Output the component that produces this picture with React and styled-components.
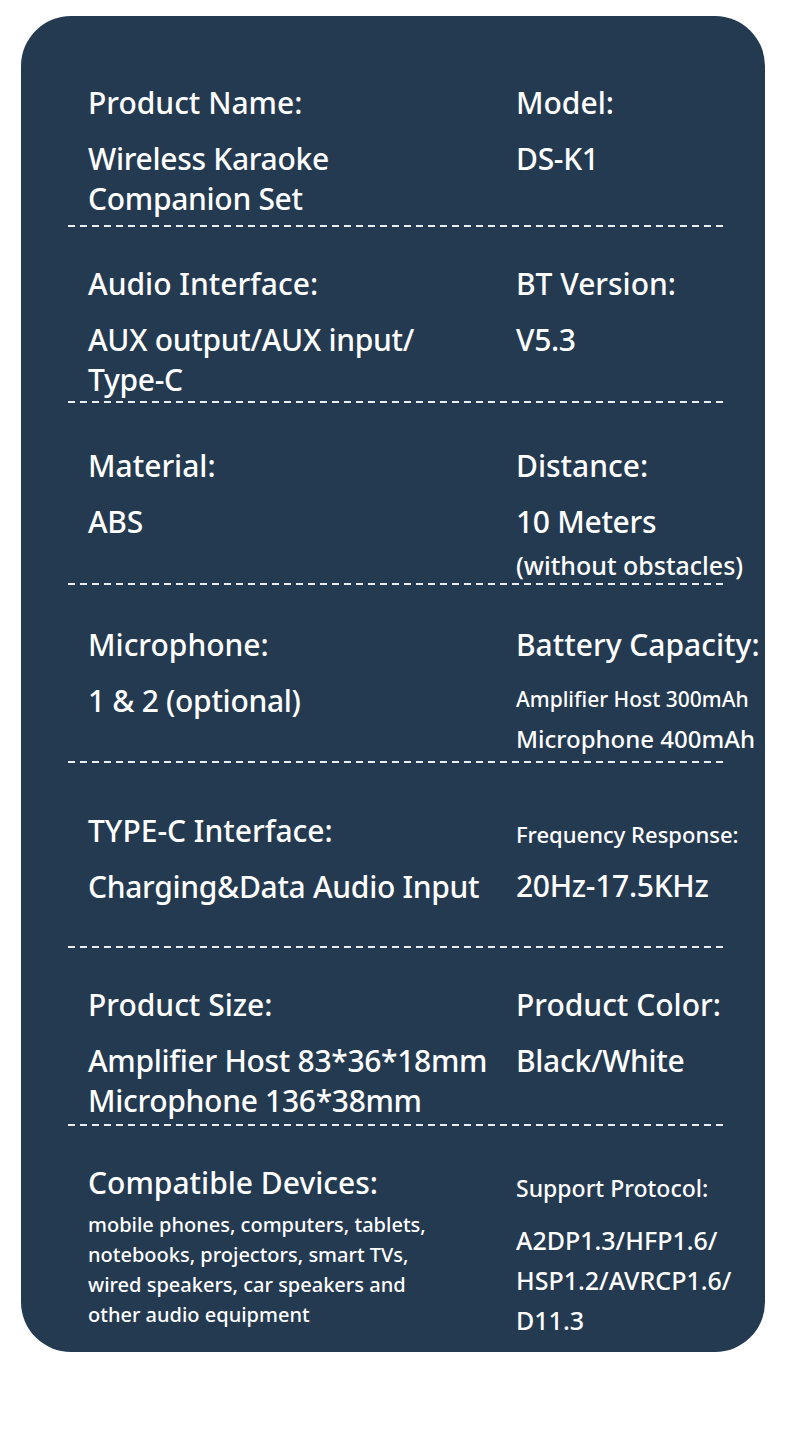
import styled, { createGlobalStyle } from "styled-components"

const GlobalStyle = createGlobalStyle`
  body {
    margin: 0;
    background: #ffffff;
    font-family: "Noto Sans", "Open Sans", sans-serif;
  }
`;

const Page = styled.div`
  padding: 16px 25px 92px 21px;
`;

const Card = styled.div`
  width: 744px;
  box-sizing: border-box;
  padding-left: 47px;
  background: #243a51;
  border-radius: 50px;
  color: #ffffff;
`;

const Section = styled.div`
  width: 657px;
  height: ${props => props.$h}px;
  box-sizing: border-box;
  padding: ${props => props.$pt}px 0 0 20px;
  display: grid;
  grid-template-columns: 428px 1fr;
  align-items: start;
  background-image: ${props => props.$last ? "none" : "linear-gradient(to right, #e9eef3 7px, transparent 7px)"};
  background-size: 12px 2px;
  background-repeat: repeat-x;
  background-position: left bottom;
`;

const Col = styled.div`
  display: flex;
  flex-direction: column;
  white-space: nowrap;
`;

const Label = styled.div`
  font-size: ${props => props.$size || 30}px;
  line-height: ${props => props.$lh || 40}px;
  font-weight: 500;
`;

const Values = styled.div`
  margin-top: ${props => props.$mt ?? 16}px;
  display: flex;
  flex-direction: column;
`;

const Line = styled.div`
  font-size: ${props => props.$size || 30}px;
  line-height: ${props => props.$lh || 40}px;
  letter-spacing: ${props => props.$size ? 0 : -0.3}px;
  font-weight: 500;
`;

const devices = [
  "mobile phones, computers, tablets,",
  "notebooks, projectors, smart TVs,",
  "wired speakers, car speakers and",
  "other audio equipment",
].map(text => ({ text, size: 20, lh: 30 }));

const protocols = ["A2DP1.3/HFP1.6/", "HSP1.2/AVRCP1.6/", "D11.3"].map(text => ({ text, size: 25 }));

const rows = [
  {
    pt: 67, h: 211,
    left: { label: "Product Name:", lines: ["Wireless Karaoke", "Companion Set"] },
    right: { label: "Model:", lines: ["DS-K1"] },
  },
  {
    pt: 37, h: 176,
    left: { label: "Audio Interface:", lines: ["AUX output/AUX input/", "Type-C"] },
    right: { label: "BT Version:", lines: ["V5.3"] },
  },
  {
    pt: 43, h: 182,
    left: { label: "Material:", lines: ["ABS"] },
    right: { label: "Distance:", lines: ["10 Meters", { text: "(without obstacles)", size: 25, lh: 46 }] },
  },
  {
    pt: 40, h: 178,
    left: { label: "Microphone:", lines: ["1 & 2 (optional)"] },
    right: {
      label: "Battery Capacity:",
      lines: [{ text: "Amplifier Host 300mAh", size: 21, lh: 36 }, { text: "Microphone 400mAh", size: 24, lh: 43 }],
    },
  },
  {
    pt: 48, h: 185,
    left: { label: "TYPE-C Interface:", lines: ["Charging&Data Audio Input"] },
    right: { label: "Frequency Response:", size: 22, lh: 46, mt: 9, lines: ["20Hz-17.5KHz"] },
  },
  {
    pt: 37, h: 178,
    left: { label: "Product Size:", lines: ["Amplifier Host 83*36*18mm", "Microphone 136*38mm"] },
    right: { label: "Product Color:", lines: ["Black/White"] },
  },
  {
    pt: 37, h: 226, last: true,
    left: { label: "Compatible Devices:", mt: 7, lines: devices },
    right: { label: "Support Protocol:", size: 23, lh: 50, mt: 7, lines: protocols },
  },
];

function Spec({ item }) {
  return (
    <Col>
      <Label $size={item.size} $lh={item.lh}>{item.label}</Label>
      <Values $mt={item.mt}>
        {item.lines.map((line, i) =>
          typeof line === "string"
            ? <Line key={i}>{line}</Line>
            : <Line key={i} $size={line.size} $lh={line.lh}>{line.text}</Line>
        )}
      </Values>
    </Col>
  );
}

export default function App() {
  return (
    <Page>
      <GlobalStyle />
      <Card>
        {rows.map((row, i) => (
          <Section key={i} $pt={row.pt} $h={row.h} $last={row.last}>
            <Spec item={row.left} />
            <Spec item={row.right} />
          </Section>
        ))}
      </Card>
    </Page>
  );
}
